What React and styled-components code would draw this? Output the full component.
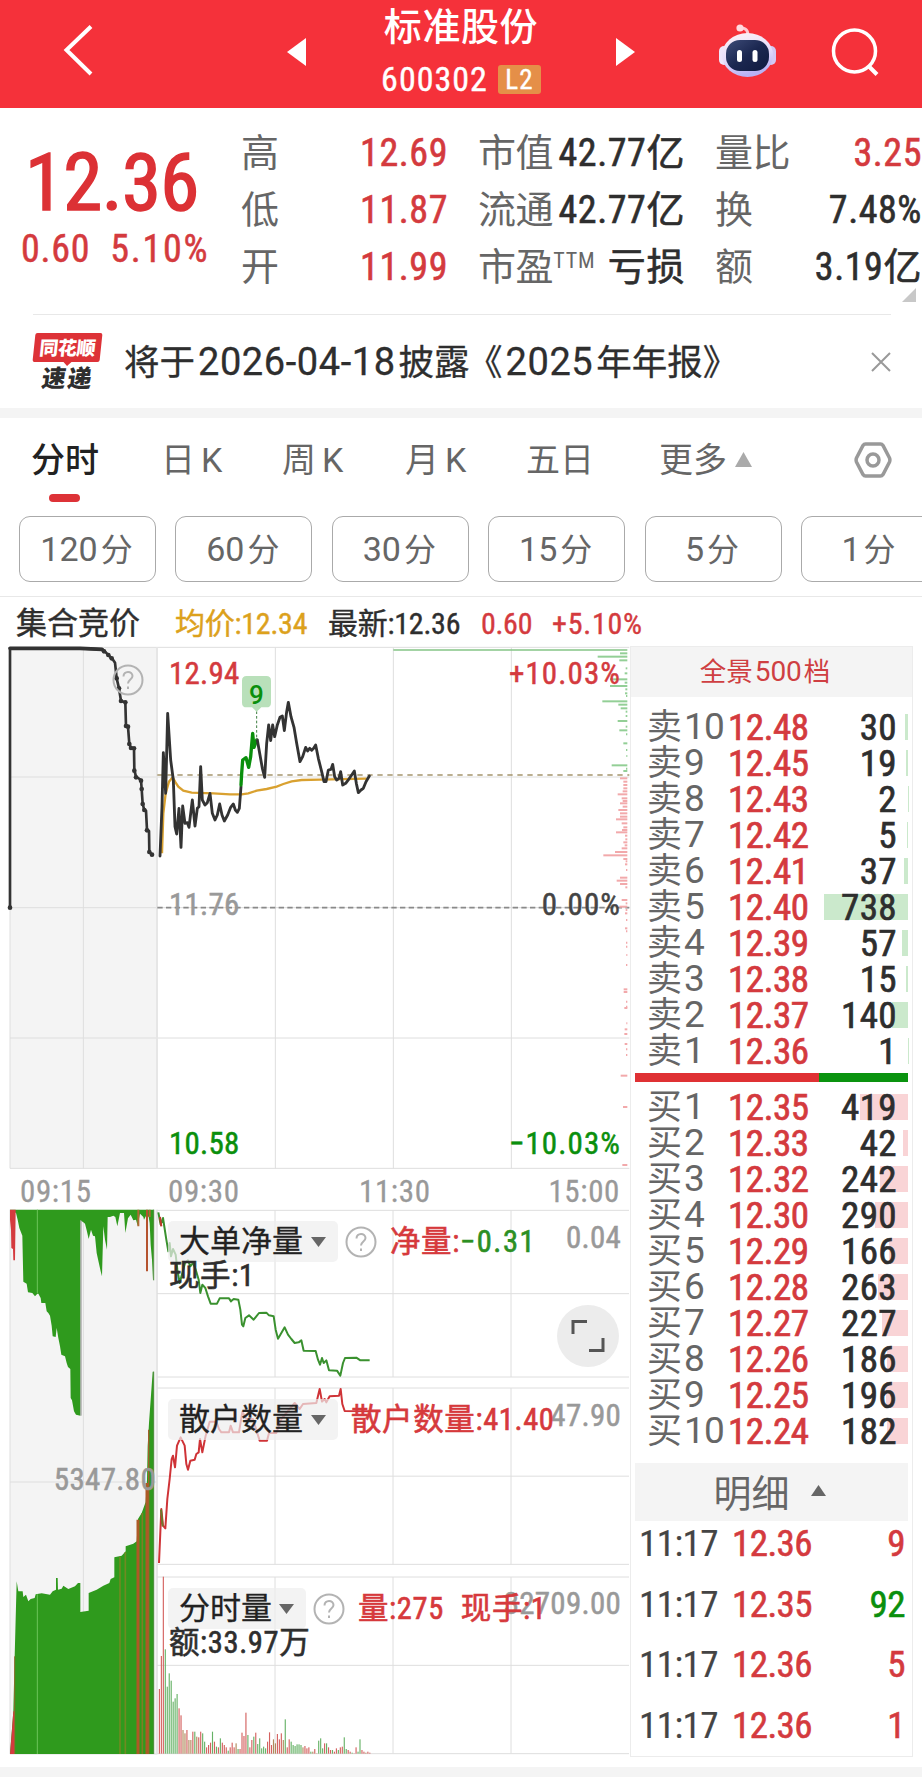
import React from "react";
import styled, { createGlobalStyle, css } from "styled-components";

const RED = "#d43a3e";
const GREEN = "#0a8f0c";

const sellRows = [
  ["10", "12.48", 30],
  ["9", "12.45", 19],
  ["8", "12.43", 2],
  ["7", "12.42", 5],
  ["6", "12.41", 37],
  ["5", "12.40", 738],
  ["4", "12.39", 57],
  ["3", "12.38", 15],
  ["2", "12.37", 140],
  ["1", "12.36", 1],
];

const buyRows = [
  ["1", "12.35", 419],
  ["2", "12.33", 42],
  ["3", "12.32", 242],
  ["4", "12.30", 290],
  ["5", "12.29", 166],
  ["6", "12.28", 263],
  ["7", "12.27", 227],
  ["8", "12.26", 186],
  ["9", "12.25", 196],
  ["10", "12.24", 182],
];

const trades = [
  ["11:17", "12.36", 9, true],
  ["11:17", "12.35", 92, false],
  ["11:17", "12.36", 5, true],
  ["11:17", "12.36", 1, true],
];

const tabs = [["分时"], ["日", "K"], ["周", "K"], ["月", "K"], ["五日"]];
const periods = ["120", "60", "30", "15", "5", "1"];

// chart data, three svg units to one pixel
const auctionPrice =
  "30,803 30,25 240,25 308,28 318,38 328,48 338,58 345,68 350,115 357,145 363,183 376,187 378,258 384,260 388,312 393,324 402,325 403,390 408,410 423,420 425,447 428,492 433,510 438,512 441,570 447,573 448,635 456,645";
const auctionDots = [
  [30, 803], [312, 34], [325, 45], [335, 55], [350, 115], [357, 145], [363, 183], [376, 187],
  [378, 258], [384, 260], [388, 312], [393, 324], [402, 325], [403, 392], [408, 412], [423, 422],
  [425, 447], [428, 492], [433, 510], [441, 571], [448, 636], [456, 644],
];
const priceA =
  "480,648 486,500 490,338 497,460 503,220 512,360 520,420 525,560 530,582 537,505 543,622 548,498 555,550 562,548 567,562 577,480 585,558 592,505 597,500 602,380 607,480 615,495 622,488 630,460 637,520 645,540 652,525 659,492 666,525 673,543 683,525 692,502 700,492 706,510 712,517 718,505 723,440";
const priceB = "723,435 725,400 728,360 738,353 746,382 752,350 758,280 762,322 770,300";
const priceC =
  "772,300 780,345 787,385 794,412 800,310 806,255 812,302 818,255 824,290 832,255 840,232 847,228 853,272 860,215 865,187 873,230 882,262 890,310 900,365 908,350 917,322 923,333 929,325 935,331 941,325 947,315 955,355 965,395 972,425 978,425 985,390 993,388 998,373 1004,410 1010,420 1017,415 1022,395 1028,435 1037,430 1046,418 1055,405 1063,393 1069,430 1075,458 1083,450 1090,445 1098,425 1108,408";
const average =
  "486,640 490,520 497,460 507,425 518,412 525,425 535,440 550,452 575,458 640,460 690,463 725,463 745,460 770,452 800,447 830,440 850,432 875,424 905,420 960,419 1100,416";

const profileGreen = [
  [40, 180], [50, 113], [61, 178], [85, 197], [100, 194], [118, 150], [128, 194], [138, 150], [148, 196],
  [160, 195], [168, 198], [184, 127], [194, 175], [205, 182], [215, 197], [228, 197], [243, 173], [260, 197],
  [271, 178], [283, 198], [310, 190], [330, 198], [348, 199], [376, 155], [386, 198], [393, 190],
];
const profileRed = [
  [415, 180], [425, 190], [435, 190], [445, 190], [454, 188], [463, 173], [475, 185], [483, 188], [490, 180],
  [500, 188], [510, 175], [520, 180], [530, 180], [538, 168], [550, 185], [562, 190], [570, 186], [577, 168],
  [587, 195], [598, 196], [607, 190], [616, 194], [625, 185], [636, 165], [646, 130], [657, 190], [664, 197],
  [673, 195], [690, 198], [713, 180], [722, 170], [732, 180], [742, 196], [780, 185], [790, 197], [800, 178],
  [810, 197], [820, 195], [840, 198], [865, 195], [874, 198], [908, 198], [920, 198], [945, 199], [975, 198],
  [1048, 191], [1056, 191], [1085, 198], [1100, 198], [1104, 193], [1150, 199], [1168, 194], [1182, 193],
  [1212, 194], [1228, 198], [1245, 198], [1307, 182], [1401, 189], [1575, 187],
];

const auctionTop =
  "30,240 461,240 461,268 459,452 456,390 452,345 449,280 446,262 440,255 432,270 430,262 420,252 413,288 408,270 400,272 392,255 384,266 376,310 372,250 360,250 352,290 346,262 340,258 330,262 323,262 321,360 315,330 310,290 306,440 302,425 296,398 290,370 285,320 279,318 273,300 270,312 266,328 260,302 255,282 250,278 241,272 241,858 228,855 222,845 216,812 212,805 211,718 204,712 200,700 195,680 184,675 180,650 175,625 170,595 167,622 158,620 155,588 150,558 145,550 140,545 136,520 124,520 122,505 115,492 112,492 105,500 97,490 84,488 80,462 70,456 67,318 58,295 53,270 48,250";
const auctionBottom =
  "30,1873 40,1745 44,1580 50,1355 55,1385 68,1385 70,1402 78,1395 85,1415 92,1408 104,1405 107,1394 125,1391 150,1395 158,1385 168,1380 168,1345 173,1345 174,1380 185,1377 190,1368 205,1378 225,1370 234,1360 241,1360 241,1447 266,1443 266,1390 290,1380 310,1368 328,1360 332,1348 343,1343 343,1283 365,1278 377,1265 377,1250 400,1242 410,1235 414,1168 425,1150 437,1117 441,1050 443,950 447,880 452,810 458,726 461,726 461,1873";

const bigOrders =
  "476,248 483,285 490,265 500,330 506,365 510,340 514,380 520,358 528,375 533,420 540,460 548,430 556,400 565,392 572,410 580,400 588,420 597,450 602,490 608,465 617,475 625,500 633,522 652,522 660,506 688,506 694,515 702,508 716,510 722,540 727,585 731,590 737,565 748,557 762,570 770,560 778,550 800,549 808,557 822,560 828,600 835,627 845,610 855,593 865,615 875,628 885,640 897,638 905,632 912,663 948,664 955,690 961,705 967,685 972,700 980,692 988,722 1012,723 1022,738 1030,700 1036,685 1070,684 1082,692 1110,692";
const retail =
  "28,522 35,360 40,410 47,418 53,330 60,270 66,210 70,200 76,235 82,170 93,145 105,170 110,225 115,242 122,215 135,212 140,195 147,190 151,150 158,190 168,140 180,98 200,98 208,120 215,130 238,130 243,110 250,130 268,130 278,68 290,90 310,90 322,130 330,155 352,155 358,132 380,132 395,90 420,60 435,42 450,60 460,45 500,42 510,0 517,38 525,30 530,40 540,22 568,20 573,0 578,45 585,66 660,67";

// top of each minute bar and its colour: r, g or m for a mixed tone
const volume =
  "747r 648r 410r 628g 740g 700g 722g 785g 775g 762g 805r 826r 870m 880m 870r 900m 900m 875r 875g 890m 892r 875r 880g 905g 922r 915r 908r 875g 905r 920g 922r 895g 908r 915r 922r 932g 922r 908r 922r 910m 927g 927r 878r 888r 818r 885g 922r 900r 890g 878r 912g 895g 925g 920g 925g 905r 877r 915r 898m 910m 882r 898r 880r 900m 838g 922r 898r 905g 915g 918g 913g 913g 915g 922m 918r 925r 922r 935g 935m 927r 940m 902g 895g 925g 910r 910g 922r 930r 930g 935r 925r 930g 922r 920r 892g 927g 930r 935r 938g 940r 922r 935g 898g 930r 935r 938m 935r 938r".split(" ");
const tone = { r: "#d4615f", g: "#66b266", m: "#b08a5c" };

const Triangle = ({ w, h, color, down, left, right }) => {
  let d = `0,${h} ${w / 2},0 ${w},${h}`;
  if (down) d = `0,0 ${w},0 ${w / 2},${h}`;
  if (left) d = `0,${h / 2} ${w},0 ${w},${h}`;
  if (right) d = `0,0 ${w},${h / 2} 0,${h}`;
  return (
    <svg width={w} height={h}>
      <polygon points={d} fill={color} />
    </svg>
  );
};

const Robot = () => (
  <svg width="60" height="56" viewBox="0 0 60 56">
    <defs>
      <linearGradient id="shell" x1="0" y1="0" x2="0.3" y2="1">
        <stop offset="0" stopColor="#fff3f6" />
        <stop offset="0.6" stopColor="#e6dcfa" />
        <stop offset="1" stopColor="#b9b2f4" />
      </linearGradient>
      <linearGradient id="visor" x1="0" y1="0" x2="1" y2="1">
        <stop offset="0" stopColor="#3e4c78" />
        <stop offset="0.5" stopColor="#1b2750" />
        <stop offset="1" stopColor="#101a3f" />
      </linearGradient>
    </defs>
    <path d="M30 12 C30 6 28 4 22 4" stroke="#ffc9d2" strokeWidth="3" fill="none" />
    <circle cx="22" cy="4" r="3.6" fill="#ffd9df" />
    <rect x="1" y="22" width="10" height="19" rx="5" fill="#efe6fa" />
    <rect x="48" y="22" width="10" height="19" rx="5" fill="#d3c8f4" />
    <ellipse cx="29.500" cy="31" rx="25.500" ry="22" fill="url(#shell)" />
    <rect x="8" y="16" width="43" height="31" rx="14" fill="url(#visor)" />
    <rect x="19" y="26" width="5" height="12" rx="2.500" fill="#fff" />
    <rect x="34.500" y="26" width="5" height="12" rx="2.500" fill="#fff" />
  </svg>
);

const Help = () => (
  <HelpCircle>
    <svg width="32" height="32" viewBox="0 0 32 32" fill="none" stroke="#b3b3b3" strokeWidth="2">
      <circle cx="16" cy="16" r="14.500" />
      <path d="M11.500 12.500 C11.500 6.500 20.500 6.500 20.500 12 C20.500 15.500 16 15.500 16 19.500" />
      <path d="M16 22.500 V25" />
    </svg>
  </HelpCircle>
);

const Grid = ({ top, height }) => (
  <g stroke="#dedede" strokeWidth="3">
    {[826, 1180, 1534].map((x) => (
      <line key={x} x1={x} x2={x} y1={top} y2={top + height} />
    ))}
    <line x1="472" x2="1888" y1={top} y2={top} />
    <line x1="472" x2="1888" y1={top + height / 2} y2={top + height / 2} />
    <line x1="472" x2="1888" y1={top + height} y2={top + height} />
  </g>
);

const PriceChart = () => (
  <svg width="632" height="523" viewBox="0 18 1896 1569" fill="none">
    <rect x="30" y="22" width="442" height="1563" fill="#f4f4f4" />
    <g stroke="#dedede" strokeWidth="3">
      {[22, 411, 803, 1194, 1585].map((y) => (
        <line key={y} x1="30" x2="1888" y1={y} y2={y} />
      ))}
      {[30, 250, 826, 1180, 1534].map((x) => (
        <line key={x} x1={x} x2={x} y1="22" y2="1585" />
      ))}
    </g>
    <line x1="471" x2="471" y1="22" y2="1585" stroke="#e6e6e6" strokeWidth="6" />
    <line x1="472" x2="1888" y1="405" y2="405" stroke="#a5956c" strokeWidth="5" strokeDasharray="16 14" />
    <line x1="472" x2="1888" y1="803" y2="803" stroke="#8a8a8a" strokeWidth="5" strokeDasharray="16 10" />
    <line x1="1180" x2="1882" y1="30" y2="30" stroke="#84c486" strokeWidth="5" />
    {profileGreen.map(([y, x]) => (
      <line key={y} x1={x + 1680} x2="1882" y1={y} y2={y} stroke="#93cf96" strokeWidth="6" />
    ))}
    {profileRed.map(([y, x]) => (
      <line key={y} x1={x + 1680} x2="1882" y1={y} y2={y} stroke="#f2a9ab" strokeWidth="6" />
    ))}
    <polyline points={average} stroke="#d9a130" strokeWidth="7" />
    <g strokeLinejoin="round" strokeLinecap="round">
      <polyline points={auctionPrice} stroke="#333" strokeWidth="8" />
      <polyline points="30,25 240,25 306,28" stroke="#333" strokeWidth="11" />
      {auctionDots.map(([x, y], i) => (
        <circle key={i} cx={x} cy={y} r="7" fill="#333" />
      ))}
      <polyline points={priceA} stroke="#333" strokeWidth="8.500" />
      <polyline points={priceB} stroke={GREEN} strokeWidth="10" />
      <polyline points={priceC} stroke="#333" strokeWidth="8.500" />
    </g>
    <line x1="770" x2="770" y1="214" y2="300" stroke="#3f7f43" strokeWidth="3" strokeDasharray="8 6" />
    <path
      d="M740 108 H799 Q813 108 813 122 V188 Q813 202 799 202 H784 L770 215 L756 202 H740 Q726 202 726 188 V122 Q726 108 740 108 Z"
      fill="#b9e0ba"
    />
  </svg>
);

const AuctionVolume = () => (
  <svg width="158" height="547" viewBox="0 238 474 1641" fill="none">
    <rect x="30" y="240" width="442" height="1633" fill="#f4f4f4" />
    <g stroke="#dedede" strokeWidth="3">
      <line x1="30" x2="30" y1="240" y2="1873" />
      <line x1="250" x2="250" y1="240" y2="1873" />
      <line x1="30" x2="472" y1="1057" y2="1057" />
      <line x1="30" x2="472" y1="1873" y2="1873" />
    </g>
    <line x1="471" x2="471" y1="240" y2="1873" stroke="#e6e6e6" strokeWidth="6" />
    <polygon points={auctionTop} fill="#2f9a1d" />
    <polygon points="30,240 47,240 45,392 40,392 39,358 34,355 33,300 30,270" fill={RED} />
    <path d="M441 240 V425" stroke="#b5532f" strokeWidth="6" />
    <path d="M415 240 V290 M449 240 V262" stroke="#b06a35" strokeWidth="6" />
    <path d="M461 240 V452" stroke="#4c8a3a" strokeWidth="3" />
    <polygon points={auctionBottom} fill="#2f9a1d" />
    <polygon points="30,1873 36,1800 40,1745 45,1745 44,1873" fill={RED} />
    <path d="M44 1580 V1873" stroke="#8f6a2c" strokeWidth="3" />
    <path d="M112 240 V490 M112 1394 V1873" stroke="#6cc55b" strokeWidth="3" />
    <path d="M243 272 V858" stroke="#8a8a8a" strokeWidth="3" />
    <path d="M360 1281 V1873 M376 1268 V1873" stroke="#6f8a22" strokeWidth="5" />
    <path d="M414 1170 V1873 M441 1060 V1873" stroke="#ad5a26" strokeWidth="9" />
    <path d="M427 1150 V1873" stroke="#7d7f25" strokeWidth="5" />
    <path d="M446 900 V1873" stroke="#a0602a" strokeWidth="4" />
    <path d="M461 726 V1873" stroke="#4c8a3a" strokeWidth="3" />
  </svg>
);

const BigOrderChart = () => (
  <svg width="474" height="169" viewBox="472 238 1422 507" fill="none">
    <Grid top={242} height={500} />
    <polyline points={bigOrders} stroke="#3a912f" strokeWidth="6" strokeLinejoin="round" />
    <path d="M481 262 L485 290" stroke="#c0392b" strokeWidth="6" />
  </svg>
);

const RetailChart = () => (
  <svg width="474" height="179" viewBox="22 -6 1422 537" fill="none">
    <g transform="translate(-450 0)">
      <Grid top={-3} height={529} />
    </g>
    <polyline points={retail} stroke="#cf3337" strokeWidth="6" strokeLinejoin="round" />
    <path d="M34 362 L39 412" stroke="#6d7a2a" strokeWidth="6" />
  </svg>
);

const VolumeChart = () => (
  <svg width="474" height="179" viewBox="472 408 1422 537" fill="none">
    <Grid top={411} height={530} />
    {volume.map((v, i) => (
      <rect
        key={i}
        x={477.5 + i * 5.9}
        y={parseInt(v)}
        width="3.400"
        height={941 - parseInt(v)}
        fill={tone[v.slice(-1)]}
      />
    ))}
  </svg>
);

const App = () => {
  return (
    <Page>
      <GlobalStyle />
      <Header>
        <svg width="32" height="54" viewBox="0 0 32 54" fill="none" stroke="#fff" strokeWidth="4">
          <path d="M28 1.500 L3.500 25 L28 49" />
        </svg>
        <StockSwitch>
          <Triangle w={19} h={28} color="#fff" left />
          <StockTitle>
            <StockName>标准股份</StockName>
            <StockCode>
              600302 <Level>L2</Level>
            </StockCode>
          </StockTitle>
          <Triangle w={19} h={28} color="#fff" right />
        </StockSwitch>
        <HeaderIcons>
          <Robot />
          <svg width="50" height="50" viewBox="0 0 50 50" fill="none" stroke="#fff" strokeWidth="3.500">
            <circle cx="24.500" cy="24" r="21" />
            <path d="M38.500 39 L47 47.500" strokeWidth="4" />
          </svg>
        </HeaderIcons>
      </Header>

      <Quote>
        <Current>
          <BigPrice>12.36</BigPrice>
          <Change>
            <span>0.60</span>
            <span>5.10%</span>
          </Change>
        </Current>
        <StatColumns>
          <Stat $red>
            <label>高</label>
            <span>12.69</span>
          </Stat>
          <Stat>
            <label>市值</label>
            <span>42.77亿</span>
          </Stat>
          <Stat $red>
            <label>量比</label>
            <span>3.25</span>
          </Stat>
          <Stat $red>
            <label>低</label>
            <span>11.87</span>
          </Stat>
          <Stat>
            <label>流通</label>
            <span>42.77亿</span>
          </Stat>
          <Stat>
            <label>换</label>
            <span>7.48%</span>
          </Stat>
          <Stat $red>
            <label>开</label>
            <span>11.99</span>
          </Stat>
          <Stat>
            <label>
              市盈<sup>TTM</sup>
            </label>
            <span>亏损</span>
          </Stat>
          <Stat>
            <label>额</label>
            <span>3.19亿</span>
          </Stat>
        </StatColumns>
        <Corner />
      </Quote>

      <News>
        <NewsLogo>
          <div className="tag">同花顺</div>
          <div className="word">速递</div>
        </NewsLogo>
        <NewsText>
          将于<b>2026-04-18</b>披露<i>《</i>
          <b>2025</b>年年报<i>》</i>
        </NewsText>
        <svg width="20" height="20" viewBox="0 0 20 20" stroke="#999" strokeWidth="2">
          <path d="M1 1 L19 19 M19 1 L1 19" />
        </svg>
      </News>
      <Band />

      <Tabs>
        {tabs.map(([name, k], i) => (
          <Tab key={name} $active={i === 0}>
            {name}
            {k && <span>{k}</span>}
          </Tab>
        ))}
        <Tab>
          更多
          <Triangle w={17} h={15} color="#aaa" />
        </Tab>
        <svg width="38" height="38" viewBox="0 0 38 38" fill="none" stroke="#999" strokeWidth="3.500">
          <path d="M11.500 3 H26.500 Q28 3 29 4.500 L35.500 17 Q36.300 19 35.500 21 L29 33.500 Q28 35 26.500 35 H11.500 Q10 35 9 33.500 L2.500 21 Q1.700 19 2.500 17 L9 4.500 Q10 3 11.500 3 Z" />
          <circle cx="19" cy="19" r="6" />
        </svg>
      </Tabs>
      <Periods>
        {periods.map((p) => (
          <Period key={p}>
            {p}
            <span>分</span>
          </Period>
        ))}
      </Periods>

      <InfoBar>
        <span className="title">集合竞价</span>
        <span className="avg">均价:12.34</span>
        <span className="last">最新:12.36</span>
        <span className="diff">0.60</span>
        <span className="rate">+5.10%</span>
      </InfoBar>

      <Main>
        <Charts>
          <PriceBox>
            <PriceChart />
            <HelpSpot>
              <Help />
            </HelpSpot>
            <SignalNum>9</SignalNum>
            <Scale $top={10} $left={169} $color={RED}>12.94</Scale>
            <Scale $top={241} $left={169} $color="#999">11.76</Scale>
            <Scale $top={480} $left={169} $color={GREEN}>10.58</Scale>
            <Scale $top={10} $color={RED} $spread>+10.03%</Scale>
            <Scale $top={241} $color="#444" $spread>0.00%</Scale>
            <Scale $top={480} $color={GREEN} $spread>−10.03%</Scale>
          </PriceBox>
          <TimeAxis>
            <span>09:15</span>
            <span>09:30</span>
            <span>11:30</span>
            <span>15:00</span>
          </TimeAxis>
          <Indicators>
            <AuctionBox>
              <AuctionVolume />
              <Scale $top={253}>5347.80</Scale>
            </AuctionBox>
            <Panels>
              <Panel $height={178}>
                <BigOrderChart />
                <Scale $top={11} $color="#999">0.04</Scale>
                <Legend>
                  <Picker $width={170}>
                    大单净量
                    <Triangle w={15} h={10} color="#666" down />
                  </Picker>
                  <Help />
                  <Value>
                    净量:<em>−0.31</em>
                  </Value>
                </Legend>
                <SubLegend>现手:1</SubLegend>
                <Expand>
                  <svg width="34" height="34" viewBox="0 0 34 34" fill="none" stroke="#555" strokeWidth="3">
                    <path d="M2 15 V2.500 H16 M18 31.500 H32 V19" />
                  </svg>
                </Expand>
              </Panel>
              <Panel $height={189}>
                <RetailChart />
                <Scale $top={11} $color="#999">47.90</Scale>
                <Legend>
                  <Picker $width={170}>
                    散户数量
                    <Triangle w={15} h={10} color="#666" down />
                  </Picker>
                  <Value>散户数量:41.40</Value>
                </Legend>
              </Panel>
              <Panel $height={180}>
                <VolumeChart />
                <Scale $top={10} $color="#999">32709.00</Scale>
                <Legend>
                  <Picker $width={138}>
                    分时量
                    <Triangle w={15} h={10} color="#666" down />
                  </Picker>
                  <Help />
                  <Value>量:275</Value>
                  <Value $near>现手:1</Value>
                </Legend>
                <SubLegend>额:33.97万</SubLegend>
              </Panel>
            </Panels>
          </Indicators>
        </Charts>

        <Book>
          <BookHead>
            全景<b>500</b>档
          </BookHead>
          <Orders>
            {sellRows.map(([level, price, vol]) => (
              <Order key={level}>
                <span className="level">
                  卖<b>{level}</b>
                </span>
                <span className="price">{price}</span>
                <span className="vol">{vol}</span>
                <Depth $color="#cbe9cc" style={{ width: vol * 0.114 }} />
              </Order>
            ))}
          </Orders>
          <Ratio />
          <Orders>
            {buyRows.map(([level, price, vol]) => (
              <Order key={level}>
                <span className="level">
                  买<b>{level}</b>
                </span>
                <span className="price">{price}</span>
                <span className="vol">{vol}</span>
                <Depth $color="#f9d4d6" style={{ width: vol * 0.114 }} />
              </Order>
            ))}
          </Orders>
          <DetailHead>
            明细
            <Triangle w={15} h={11} color="#666" />
          </DetailHead>
          <Trades>
            {trades.map(([time, price, vol, up], i) => (
              <Trade key={i} $up={up}>
                <span className="time">{time}</span>
                <span className="price">{price}</span>
                <span className="vol">{vol}</span>
              </Trade>
            ))}
          </Trades>
        </Book>
      </Main>
      <Band />
    </Page>
  );
};

const GlobalStyle = createGlobalStyle`
  * { box-sizing: border-box; }
  body {
    margin: 0;
    background: #fff;
    overflow: hidden;
    font-family: "Roboto Condensed", "Noto Sans CJK SC", sans-serif;
  }
  svg { display: block; flex: none; }
`;

const wide = css`
  font-family: Roboto, "Noto Sans CJK SC", sans-serif;
  letter-spacing: 0;
`;

// weight between regular and medium
const semi = css`
  font-weight: 400;
  -webkit-text-stroke: 0.6px currentColor;
`;

const Page = styled.div`
  width: 922px;
  height: 1792px;
  overflow: hidden;
  white-space: nowrap;
  letter-spacing: 0.02em;
  color: #2e2e2e;
`;

const Header = styled.header`
  height: 108px;
  padding: 0 42px 4px 63px;
  display: flex;
  align-items: center;
  background: #f5313a;
  color: #fff;
`;
const StockSwitch = styled.div`
  width: 348px;
  margin-left: 192px;
  display: flex;
  align-items: center;
  justify-content: space-between;
`;
const StockTitle = styled.div`
  display: flex;
  flex-direction: column;
  align-items: center;
`;
const StockName = styled.div`
  font-size: 38px;
  font-weight: 500;
  line-height: 54px;
  letter-spacing: 0.015em;
`;
const StockCode = styled.div`
  ${semi}
  -webkit-text-stroke-width: 0.4px;
  display: flex;
  align-items: center;
  gap: 10px;
  height: 51px;
  font-size: 34px;
  letter-spacing: 0.03em;
`;
const Level = styled.span`
  width: 43px;
  height: 29px;
  border-radius: 3px;
  background: #e58f48;
  font-size: 27px;
  line-height: 30px;
  text-align: center;
`;
const HeaderIcons = styled.div`
  margin-left: auto;
  display: flex;
  align-items: center;
  gap: 52px;
`;

const Quote = styled.section`
  position: relative;
  height: 206px;
  display: flex;
  padding-top: 16px;
`;
const Current = styled.div`
  flex: none;
  width: 241px;
  padding-left: 21px;
  color: #dc3135;
`;
const BigPrice = styled.div`
  margin: 12px 0 0 4px;
  font-size: 79px;
  font-weight: 400;
  -webkit-text-stroke: 1.500px currentColor;
  line-height: 94px;
  letter-spacing: -0.008em;
`;
const Change = styled.div`
  ${semi}
  -webkit-text-stroke-width: 0.5px;
  display: flex;
  gap: 20px;
  font-size: 38px;
  line-height: 39px;
  letter-spacing: 0.02em;
  color: ${RED};
  span:last-child {
    letter-spacing: 0.045em;
  }
`;
const StatColumns = styled.div`
  flex: none;
  display: grid;
  grid-template-columns: 206px 206px 206px;
  grid-auto-rows: 57px;
  column-gap: 31px;
  padding-top: 1px;
`;
const Stat = styled.div`
  display: flex;
  align-items: center;
  justify-content: space-between;
  font-size: 38px;
  line-height: 57px;
  label {
    font-size: 38px;
    line-height: 55px;
    color: #666;
    letter-spacing: -0.01em;
  }
  sup {
    font-size: 22px;
    line-height: 1;
    vertical-align: 12px;
    letter-spacing: 0.04em;
  }
  span {
    ${semi}
    letter-spacing: 0.015em;
    margin-right: -1px;
    color: ${(p) => (p.$red ? RED : "#2e2e2e")};
  }
`;
const Corner = styled.div`
  position: absolute;
  right: 6px;
  bottom: 12px;
  border-left: 14px solid transparent;
  border-bottom: 14px solid #c8c8c8;
`;

const News = styled.section`
  height: 94px;
  margin: 0 31px 0 33px;
  border-top: 1px solid #e8e8e8;
  display: flex;
  align-items: center;
  svg {
    margin-left: auto;
  }
`;
const NewsLogo = styled.div`
  width: 70px;
  margin-right: 21px;
  font-family: "Noto Sans CJK SC", sans-serif;
  font-weight: 900;
  text-align: center;
  letter-spacing: -0.02em;
  .tag {
    position: relative;
    height: 29px;
    margin: 0 2px 0 1px;
    border-radius: 2px;
    background: #dd3237;
    color: #fff;
    font-size: 19px;
    line-height: 28px;
    transform: skewX(-6deg);
  }
  .tag::after {
    content: "";
    position: absolute;
    left: 30px;
    top: 28px;
    border: 5px solid transparent;
    border-top-color: #dd3237;
  }
  .word {
    margin-top: 2px;
    font-size: 24px;
    line-height: 26px;
    letter-spacing: 0.08em;
    transform: skewX(-8deg);
  }
`;
const NewsText = styled.div`
  ${semi}
  -webkit-text-stroke-width: 0.3px;
  display: flex;
  align-items: baseline;
  margin-top: -5px;
  font-size: 35.500px;
  letter-spacing: 0;
  b {
    ${wide}
    font-size: 38px;
    font-weight: 400;
    margin: 0 3px;
    letter-spacing: 0.015em;
  }
  i {
    font-style: normal;
    width: 33px;
    display: flex;
    justify-content: flex-end;
  }
  i:last-child {
    justify-content: flex-start;
  }
`;
const Band = styled.div`
  height: 10px;
  background: #f4f4f4;
`;

const Tabs = styled.nav`
  height: 98px;
  padding: 0 30px 14px 31px;
  display: grid;
  grid-template-columns: 130px 121px 123px 121px 133px 1fr auto;
  align-items: center;
`;
const Tab = styled.div`
  ${wide}
  position: relative;
  display: flex;
  align-items: baseline;
  gap: 8px;
  font-size: 34px;
  line-height: 52px;
  height: 52px;
  color: ${(p) => (p.$active ? "#222" : "#666")};
  font-weight: ${(p) => (p.$active ? 500 : 400)};
  span {
    margin-left: -2px;
  }
  svg {
    align-self: center;
    margin-top: -1px;
  }
  &::after {
    content: "";
    display: ${(p) => (p.$active ? "block" : "none")};
    position: absolute;
    left: 18px;
    bottom: -16px;
    width: 31px;
    height: 8px;
    border-radius: 4px;
    background: #dd3237;
  }
`;
const Periods = styled.div`
  display: flex;
  gap: 19.400px;
  height: 81px;
  padding-left: 19px;
  border-bottom: 1px solid #e8e8e8;
`;
const Period = styled.div`
  ${wide}
  flex: none;
  width: 137px;
  height: 66px;
  display: flex;
  align-items: baseline;
  justify-content: center;
  gap: 3px;
  padding-right: 2px;
  border: 1.500px solid #aaa;
  border-radius: 11px;
  font-size: 34px;
  line-height: 65px;
  color: #666;
  span {
    font-size: 32px;
    line-height: 60px;
  }
`;

const InfoBar = styled.div`
  height: 49px;
  padding: 0 0 0 16px;
  display: flex;
  align-items: baseline;
  line-height: 54px;
  font-size: 30px;
  letter-spacing: 0;
  ${semi}
  -webkit-text-stroke-width: 0.4px;
  .title {
    width: 159px;
    font-size: 31px;
  }
  .avg {
    width: 153px;
    color: #dca11c;
  }
  .last {
    width: 153px;
  }
  .avg,
  .last {
    letter-spacing: -0.008em;
  }
  .diff {
    width: 71px;
    letter-spacing: -0.01em;
    color: ${RED};
  }
  .rate {
    letter-spacing: 0.025em;
    color: ${RED};
  }
`;

const Main = styled.main`
  display: flex;
  height: 1121px;
`;
const Charts = styled.div`
  width: 630px;
`;
const PriceBox = styled.div`
  position: relative;
  height: 523px;
  overflow: hidden;
`;
const HelpCircle = styled.div`
  flex: none;
  width: 32px;
  height: 32px;
`;
const HelpSpot = styled.div`
  position: absolute;
  left: 112px;
  top: 18px;
`;
const SignalNum = styled.div`
  ${wide}
  position: absolute;
  left: 242px;
  top: 33px;
  width: 29px;
  text-align: center;
  font-size: 26px;
  font-weight: 500;
  line-height: 32px;
  color: ${GREEN};
`;
const Scale = styled.div`
  ${semi}
  -webkit-text-stroke-width: 0.5px;
  position: absolute;
  top: ${(p) => p.$top}px;
  ${(p) => (p.$left ? `left: ${p.$left}px;` : "right: 9px;")}
  font-size: 31px;
  line-height: 36px;
  letter-spacing: ${(p) => (p.$spread ? "0.035em" : "0.008em")};
  color: ${(p) => p.$color};
`;
const TimeAxis = styled.div`
  ${semi}
  -webkit-text-stroke-width: 0.3px;
  height: 40px;
  padding: 6px 10px 0 20px;
  display: grid;
  grid-template-columns: 148px 191px 1fr auto;
  align-items: center;
  font-size: 31px;
  line-height: 34px;
  letter-spacing: 0.02em;
  color: #999;
`;
const Indicators = styled.div`
  display: flex;
`;
const AuctionBox = styled.div`
  position: relative;
  flex: none;
  width: 157px;
  ${Scale} {
    right: 1px;
    color: #999;
    letter-spacing: 0.01em;
  }
`;
const Panels = styled.div`
  flex: none;
  width: 473px;
`;
const Panel = styled.div`
  position: relative;
  height: ${(p) => p.$height}px;
`;
const Legend = styled.div`
  position: absolute;
  left: 11px;
  top: 12px;
  height: 41px;
  display: flex;
  align-items: center;
  gap: 7px;
`;
const Picker = styled.div`
  ${semi}
  -webkit-text-stroke-width: 0.3px;
  width: ${(p) => p.$width}px;
  height: 41px;
  padding: 0 12px 0 11px;
  display: flex;
  align-items: center;
  justify-content: space-between;
  border-radius: 5px;
  background: rgba(238, 238, 238, 0.7);
  font-size: 31px;
  line-height: 40px;
  letter-spacing: 0;
  color: #222;
`;
const Value = styled.div`
  ${semi}
  margin-left: ${(p) => (p.$near ? 10 : 6)}px;
  font-size: 30.500px;
  line-height: 40px;
  letter-spacing: 0.02em;
  color: #d6393c;
  em {
    font-style: normal;
    letter-spacing: 0.05em;
    color: #2c8f22;
  }
`;
const SubLegend = styled.div`
  ${semi}
  position: absolute;
  left: 12px;
  top: 49px;
  font-size: 30.500px;
  line-height: 36px;
  letter-spacing: 0.02em;
`;
const Expand = styled.div`
  position: absolute;
  left: 400px;
  top: 96px;
  width: 62px;
  height: 62px;
  border-radius: 50%;
  background: #ececec;
  display: flex;
  align-items: center;
  justify-content: center;
`;

const Book = styled.aside`
  width: 283px;
  height: 1111px;
  border: 1px solid #ececec;
`;
const BookHead = styled.div`
  height: 50px;
  background: #f4f4f4;
  display: flex;
  align-items: baseline;
  justify-content: center;
  letter-spacing: 0;
  font-size: 26.500px;
  line-height: 50px;
  color: #cf3f42;
  padding-right: 13px;
  b {
    ${wide}
    font-weight: 400;
    font-size: 28px;
    margin: 0 2px;
  }
`;
const Orders = styled.div`
  padding: 12px 4px 4px 16px;
`;
const Order = styled.div`
  position: relative;
  height: 36px;
  display: grid;
  grid-template-columns: 81px 1fr auto;
  align-items: center;
  padding-right: 11px;
  font-size: 37px;
  line-height: 36px;
  ${semi}
  -webkit-text-stroke-width: 0.7px;
  .level {
    ${wide}
    -webkit-text-stroke-width: 0;
    font-size: 35px;
    color: #666;
  }
  .level b {
    margin-left: 2px;
    font-size: 37px;
    font-weight: 400;
    letter-spacing: -0.02em;
  }
  .price {
    color: ${RED};
    letter-spacing: -0.012em;
  }
  .vol {
    position: relative;
    z-index: 1;
    letter-spacing: 0.01em;
  }
`;
const Depth = styled.div`
  position: absolute;
  right: 0;
  top: 5px;
  height: 26px;
  background: ${(p) => p.$color};
`;
const Ratio = styled.div`
  height: 9px;
  margin: 0 4px;
  background: linear-gradient(to right, #df3134 184px, #0a930f 184px);
  & + ${Orders} {
    padding: 7px 4px 14px 16px;
  }
`;
const DetailHead = styled.div`
  height: 58px;
  margin: 0 4px;
  padding: 0 4px 4px 0;
  background: #f4f4f4;
  display: flex;
  align-items: center;
  justify-content: center;
  gap: 21px;
  font-size: 38px;
  letter-spacing: 0;
  color: #666;
`;
const Trades = styled.div`
  padding: 1px 7px 0 8px;
  display: flex;
  flex-direction: column;
  gap: 16.700px;
`;
const Trade = styled.div`
  height: 44px;
  display: grid;
  grid-template-columns: 93px 1fr auto;
  align-items: center;
  font-size: 37px;
  line-height: 44px;
  letter-spacing: -0.015em;
  ${semi}
  color: ${RED};
  .time {
    -webkit-text-stroke-width: 0.2px;
    color: #444;
  }
  .vol {
    color: ${(p) => (p.$up ? RED : GREEN)};
  }
`;

export default App;
